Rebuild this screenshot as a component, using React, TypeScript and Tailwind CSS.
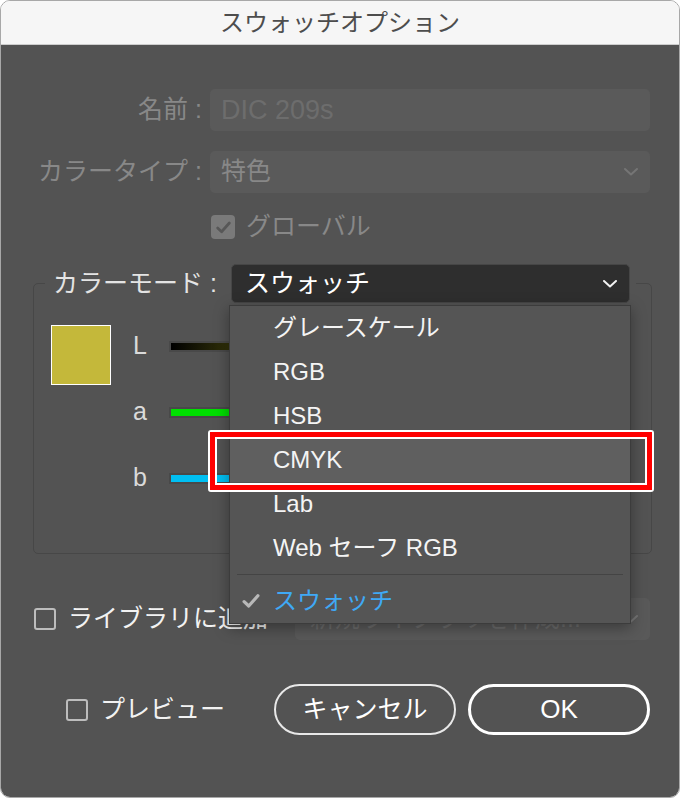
import React from 'react';

const FONT = "font-['Liberation_Sans','Noto_Sans_CJK_JP',sans-serif]";

const Chevron: React.FC<{ color: string }> = ({ color }) => (
  <svg width="14" height="8" viewBox="0 0 14 8" fill="none">
    <path d="M1 1 L7 6.5 L13 1" stroke={color} strokeWidth="2" strokeLinecap="round" strokeLinejoin="round" />
  </svg>
);

const Check: React.FC<{ color: string; size?: number }> = ({ color, size = 16 }) => (
  <svg width={size} height={size} viewBox="0 0 16 16" fill="none">
    <path d="M2.5 8.5 L6.2 12 L13.5 3.8" stroke={color} strokeWidth="2.6" strokeLinecap="round" strokeLinejoin="round" />
  </svg>
);

const menuItems = ['グレースケール', 'RGB', 'HSB', 'CMYK', 'Lab', 'Web セーフ RGB'];

const sliders = [
  { label: 'L', bar: 'bg-[linear-gradient(90deg,#000000,#34340a_18%,#9c9424)]' },
  { label: 'a', bar: 'bg-[linear-gradient(90deg,#00e000,#00d400)]' },
  { label: 'b', bar: 'bg-[#00bff2]' },
];

export default function App() {
  return (
    <div className="w-[680px] h-[798px] bg-white">
      <div className={`${FONT} relative flex flex-col w-[680px] h-[798px] rounded-[10px] overflow-hidden border border-[#a8a8a8]`}>
        {/* title bar */}
        <div className="h-[44px] shrink-0 bg-[#f6f6f6] border-b border-[#cdcdcd] flex items-center justify-center text-[24px] text-[#4d4d4d]">
          スウォッチオプション
        </div>

        <div className="relative flex-1 bg-[#535353]">
          {/* name */}
          <div className="flex items-center h-[42px] mt-[44px]">
            <div className="w-[201px] text-right text-[25px] text-[#888888] whitespace-nowrap">名前 :</div>
            <div className="ml-[8px] w-[440px] h-[42px] rounded-[5px] bg-[#5a5a5a] flex items-center px-[11px] text-[27px] text-[#6d6d6d]">
              DIC 209s
            </div>
          </div>

          {/* color type */}
          <div className="flex items-center h-[42px] mt-[20px]">
            <div className="w-[201px] text-right text-[25px] text-[#888888] whitespace-nowrap">カラータイプ :</div>
            <div className="ml-[8px] w-[440px] h-[42px] rounded-[5px] bg-[#5a5a5a] flex items-center justify-between pl-[11px] pr-[12px] text-[25px] text-[#888888]">
              <span>特色</span>
              <Chevron color="#757575" />
            </div>
          </div>

          {/* global */}
          <div className="flex items-center h-[24px] mt-[22px] ml-[210px]">
            <div className="w-[24px] h-[24px] rounded-[4px] bg-[#7a7a7a] flex items-center justify-center">
              <Check color="#575757" size={17} />
            </div>
            <span className="ml-[11px] text-[25px] text-[#888888]">グローバル</span>
          </div>

          {/* color mode group */}
          <fieldset className="mt-[25px] ml-[32px] w-[619px] h-[290px] border border-[#474747] rounded-[5px]">
            <legend className="ml-[11px] pl-[8px] pr-[6px]">
              <div className="flex items-center h-[39px]">
                <span className="w-[169px] text-[25px] text-[#e4e4e4] whitespace-nowrap">カラーモード :</span>
                <div className="ml-[9px] w-[399px] h-[39px] rounded-[5px] bg-[#2e2e2e] border border-[#464646] flex items-center justify-between pl-[13px] pr-[12px] text-[25px] text-white">
                  <span>スウォッチ</span>
                  <Chevron color="#f2f2f2" />
                </div>
              </div>
            </legend>

            <div className="flex items-start mt-[21px] ml-[17px]">
              <div className="mt-[1px] w-[60px] h-[60px] bg-[#c4b83a] border border-white" />
              <div className="ml-[22px] flex flex-col gap-[22px]">
                {sliders.map((s) => (
                  <div key={s.label} className="flex items-center h-[44px]">
                    <span className="w-[36px] text-[25px] text-[#dadada]">{s.label}</span>
                    <div className="w-[350px] h-[11px] p-[2px] bg-[#494949]">
                      <div className={`w-full h-full ${s.bar}`} />
                    </div>
                  </div>
                ))}
              </div>
            </div>
          </fieldset>

          {/* add to library */}
          <div className="flex items-center h-[42px] mt-[44px]">
            <div className="ml-[33px] w-[22px] h-[22px] rounded-[3px] border-2 border-[#bdbdbd]" />
            <span className="ml-[12px] text-[25px] text-[#f2f2f2]">ライブラリに追加</span>
            <div className="ml-auto mr-[29px] w-[355px] h-[42px] rounded-[5px] bg-[#595959] flex items-center justify-between pl-[15px] pr-[12px] text-[25px] text-[#6c6c6c]">
              <span>新規ライブラリを作成...</span>
              <Chevron color="#757575" />
            </div>
          </div>

          {/* preview + buttons */}
          <div className="flex items-center h-[51px] mt-[44px]">
            <div className="ml-[65px] w-[22px] h-[22px] rounded-[3px] border-2 border-[#bdbdbd]" />
            <span className="ml-[12px] text-[25px] text-[#f2f2f2]">プレビュー</span>
            <div className="ml-auto mr-[29px] flex gap-[12px]">
              <div className="w-[182px] h-[51px] rounded-full border-2 border-[#e8e8e8] flex items-center justify-center text-[25px] text-white">
                キャンセル
              </div>
              <div className="w-[182px] h-[51px] rounded-full border-[3px] border-white flex items-center justify-center text-[26px] text-white">
                OK
              </div>
            </div>
          </div>

          {/* open dropdown menu */}
          <div className="absolute left-[228px] top-[260px] w-[402px] bg-[#555555] border border-[#3c3c3c] shadow-[0_4px_14px_rgba(0,0,0,0.35)]">
            {menuItems.map((item) => (
              <div
                key={item}
                className={`h-[44px] flex items-center pl-[43px] text-[24px] text-[#f4f4f4] ${item === 'CMYK' ? 'bg-[#5f5f5f]' : ''}`}
              >
                {item}
              </div>
            ))}
            <div className="h-[9px] flex items-center px-[7px]">
              <div className="w-full h-px bg-[#444444]" />
            </div>
            <div className="h-[44px] flex items-center pl-[11px] text-[24px] text-[#3fa9f5]">
              <Check color="#b8b8b8" size={20} />
              <span className="ml-[12px]">スウォッチ</span>
            </div>
          </div>

          {/* annotation box */}
          <div className="absolute left-[207px] top-[385px] w-[446px] h-[62px] rounded-[3px] border-2 border-white">
            <div className="w-full h-full border-[5px] border-[#ff0000]">
              <div className="w-full h-full border-2 border-white" />
            </div>
          </div>
        </div>
      </div>
    </div>
  );
}
